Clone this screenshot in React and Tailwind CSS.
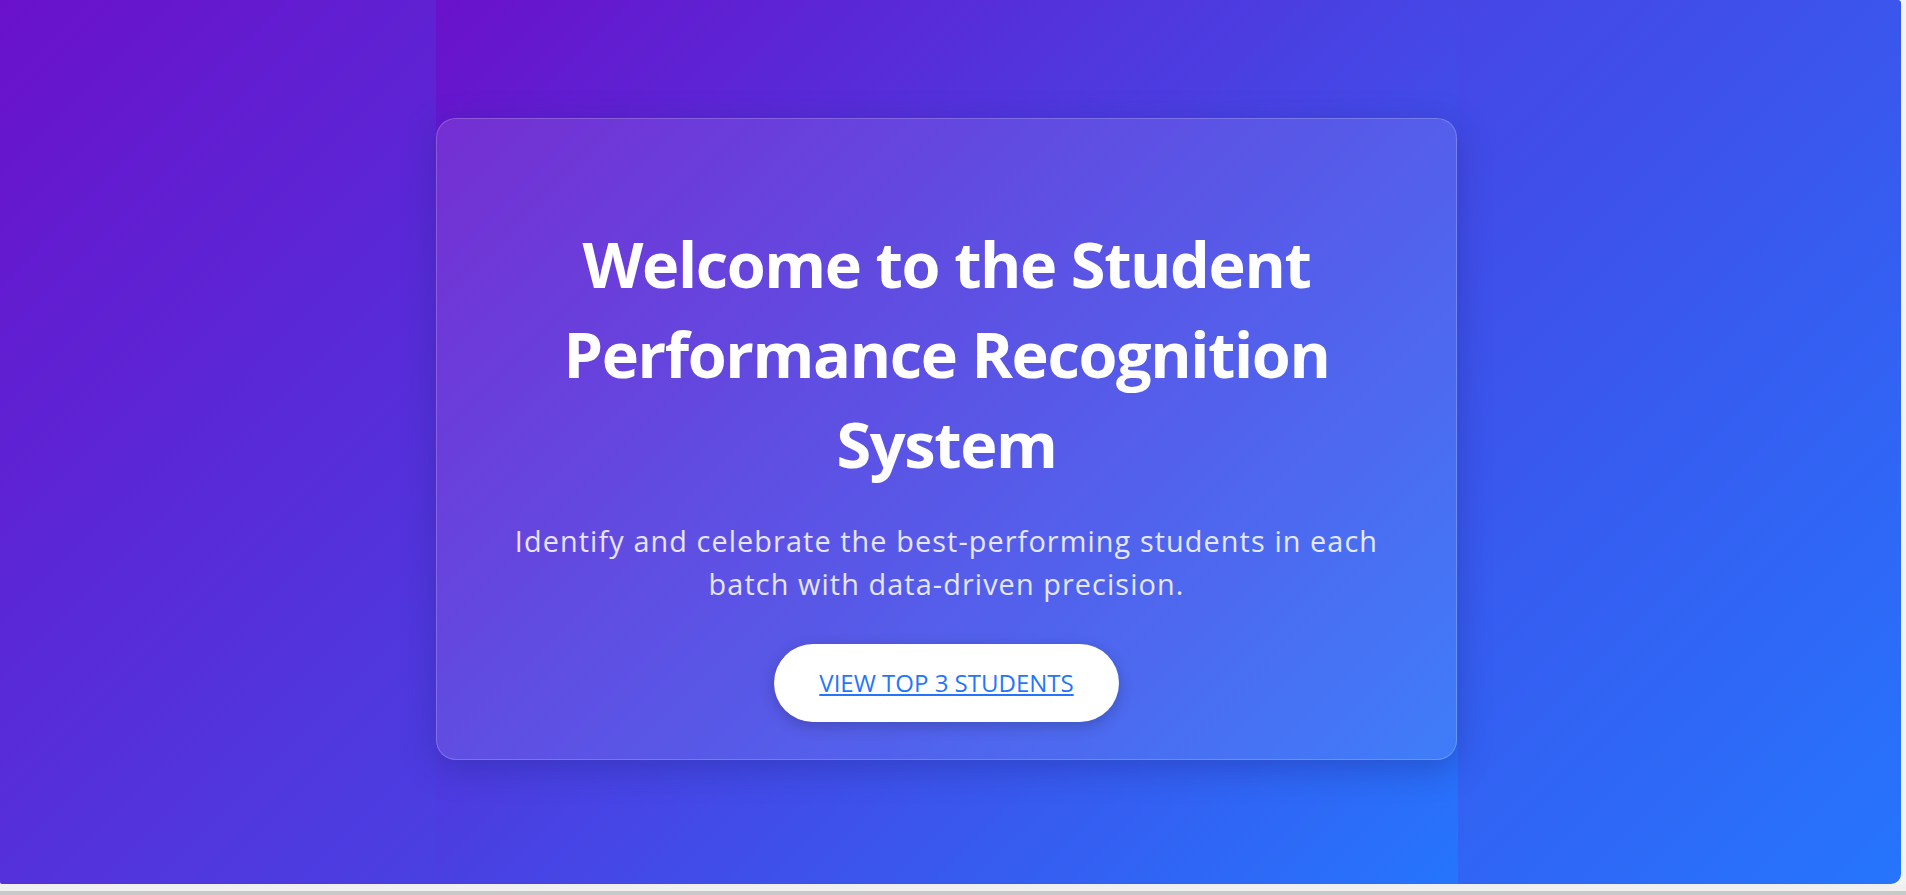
import React from "react";

const App = () => {
    return (
        <div className="w-[1906px] h-[895px] bg-[#f3f3f3] flex flex-col overflow-hidden" style={{ fontFamily: '"Open Sans", "Noto Sans", sans-serif' }}>
            {/* Page area */}
            <div className="w-[1901px] h-[884px] rounded-br-[10px] rounded-bl-[2px] rounded-tr-[3px] bg-[linear-gradient(135deg,#6a11cb_0%,#2575fc_100%)] flex">
                {/* Hero column */}
                <section className="ml-[436px] w-[1022px] h-full bg-[linear-gradient(135deg,#6a11cb_0%,#2575fc_100%)] pt-[118px]">
                    <div className="w-[1021px] h-[642px] rounded-[20px] border border-white/20 bg-white/10 shadow-[0_8px_32px_0_rgba(31,38,135,0.37)] px-[60px] pt-[100px] flex flex-col items-center text-center">
                        <h1 className="text-[63px] leading-[90px] tracking-[-1.4px] font-bold text-white">
                            Welcome to the Student Performance Recognition System
                        </h1>
                        <p className="mt-[30px] text-[28.8px] leading-[43.2px] tracking-[1.1px] text-white/85">
                            Identify and celebrate the best-performing students in each batch with data-driven precision.
                        </p>
                        <a
                            href="#top"
                            className="mt-[39px] h-[78px] px-[45px] flex items-center rounded-full bg-white text-[#2575fc] text-[24px] uppercase underline shadow-[0_4px_15px_rgba(0,0,0,0.2)]"
                        >
                            View Top 3 Students
                        </a>
                    </div>
                </section>
            </div>
            <div className="h-[7px] bg-[#f0f0f0]" />
            <div className="h-[4px] bg-[#c9c9c9]" />
        </div>
    );
};

export default App;
